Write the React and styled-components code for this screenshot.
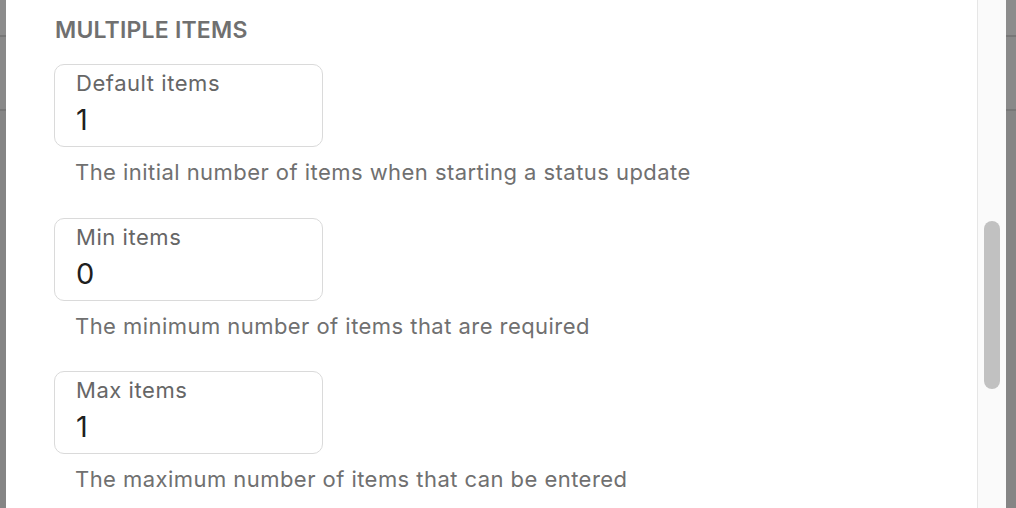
import React from 'react';
import styled, { createGlobalStyle } from 'styled-components';

const GlobalStyle = createGlobalStyle`
  html, body {
    margin: 0;
    padding: 0;
    background: #878787;
    font-family: Inter, "Open Sans", "Liberation Sans", sans-serif;
    -webkit-font-smoothing: antialiased;
  }
`;

const Screen = styled.div`
  display: flex;
  width: 1016px;
  height: 508px;
  overflow: hidden;
`;

// the dimmed page behind the modal, peeking out at both sides
const Backdrop = styled.div`
  flex: 0 0 ${({ width }) => width}px;
  display: flex;
  flex-direction: column;
  background: #858585;
`;

const BackdropBand = styled.div`
  height: ${({ height }) => height}px;
  background: ${({ shade }) => shade};
  border-bottom: 2px solid #777777;
`;

const Panel = styled.div`
  flex: 1;
  display: flex;
  background: #ffffff;
`;

const Content = styled.div`
  flex: 1;
  padding: 15px 0 0 48px;
`;

const SectionTitle = styled.h3`
  margin: 0 0 19px 1px;
  font-size: 23px;
  line-height: 30px;
  font-weight: 600;
  letter-spacing: 0.2px;
  color: #707070;
`;

const Field = styled.div`
  margin-bottom: 31.5px;
`;

const InputBox = styled.div`
  box-sizing: border-box;
  width: 269px;
  height: 83px;
  border: 1.5px solid #dadada;
  border-radius: 10px;
  padding: 4px 0 0 21px;
`;

const Label = styled.div`
  font-size: 22px;
  line-height: 28px;
  color: #666666;
  letter-spacing: 0.55px;
`;

const Value = styled.div`
  margin-top: 5px;
  font-size: 29px;
  line-height: 36px;
  color: #1f1f1f;
`;

const Help = styled.p`
  margin: 11px 0 0 21px;
  font-size: 22px;
  line-height: 28px;
  color: #707070;
  letter-spacing: 0.45px;
`;

const ScrollTrack = styled.div`
  flex: 0 0 29px;
  background: #fafafa;
  border-left: 1px solid #e6e6e6;
  padding: 221px 0 0 6px;
  box-sizing: border-box;
`;

const ScrollThumb = styled.div`
  width: 16px;
  height: 168px;
  border-radius: 8px;
  background: #c1c1c1;
`;

const fields = [
  { label: 'Default items', value: '1', help: 'The initial number of items when starting a status update' },
  { label: 'Min items', value: '0', help: 'The minimum number of items that are required' },
  { label: 'Max items', value: '1', help: 'The maximum number of items that can be entered' },
];

const BackdropSide = ({ width }) => (
  <Backdrop width={width}>
    <BackdropBand height={35} shade="#8c8c8c" />
    <BackdropBand height={72} shade="#898989" />
  </Backdrop>
);

const App = () => (
  <>
    <GlobalStyle />
    <Screen>
      <BackdropSide width={6} />
      <Panel>
        <Content>
          <SectionTitle>MULTIPLE ITEMS</SectionTitle>
          {fields.map((f) => (
            <Field key={f.label}>
              <InputBox>
                <Label>{f.label}</Label>
                <Value>{f.value}</Value>
              </InputBox>
              <Help>{f.help}</Help>
            </Field>
          ))}
        </Content>
        <ScrollTrack>
          <ScrollThumb />
        </ScrollTrack>
      </Panel>
      <BackdropSide width={10} />
    </Screen>
  </>
);

export default App;
